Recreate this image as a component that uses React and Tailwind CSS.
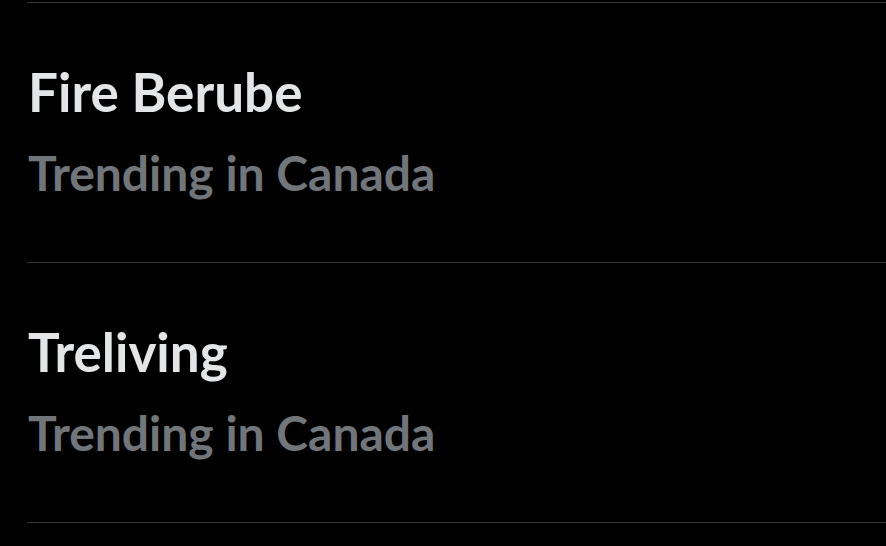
export default function App() {
  const trends = [{ title: "Fire Berube" }, { title: "Treliving" }]

  return (
    <div className="min-h-[546px] w-[886px] bg-black pl-[27px] pt-[2px] overflow-hidden" style={{ fontFamily: "Lato, 'Open Sans', sans-serif" }}>
      {trends.map((t) => (
        <div key={t.title} className="h-[260px] border-t border-[#2f3336] pl-px pt-[58px]">
          <div className="text-[53px] font-bold leading-[62px] text-[#e3e5e6]">{t.title}</div>
          <div className="mt-[22px] text-[48px] font-bold leading-[56px] text-[#71767b]">Trending in Canada</div>
        </div>
      ))}
      <div className="border-t border-[#2f3336]" />
    </div>
  )
}
